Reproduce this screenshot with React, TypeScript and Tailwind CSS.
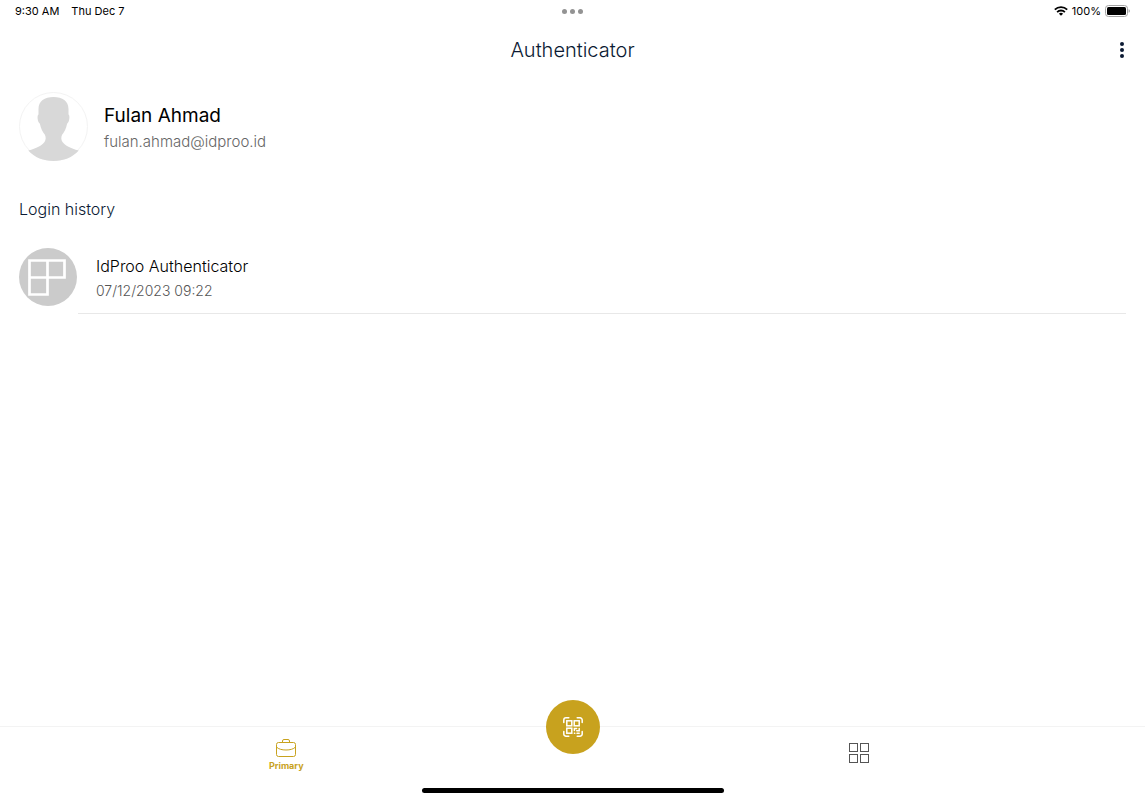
const loginHistory = [
  { id: 1, name: 'IdProo Authenticator', time: '07/12/2023 09:22' },
];

function WifiIcon() {
  return (
    <svg width="14" height="10" viewBox="0 0 14 10" fill="none" stroke="#000" strokeWidth="1.8" aria-hidden="true">
      <path d="M0.8 3.7a8.9 8.9 0 0 1 12.4 0" />
      <path d="M3.1 6.1a5.6 5.6 0 0 1 7.8 0" />
      <path d="M7 9.8L4.9 7.8a3 3 0 0 1 4.2 0z" fill="#000" stroke="none" />
    </svg>
  );
}

function BatteryIcon() {
  return (
    <svg width="25" height="12" viewBox="0 0 25 12" fill="none" aria-hidden="true">
      <rect x="0.5" y="0.5" width="22" height="11" rx="3" stroke="#a3a3a3" />
      <rect x="2" y="2" width="19" height="8" rx="1.5" fill="#000" />
      <path d="M23.6 4.2c1 .3 1.2 1 1.2 1.8s-.2 1.5-1.2 1.8z" fill="#a3a3a3" />
    </svg>
  );
}

function StatusBar() {
  return (
    <div className="grid grid-cols-3 items-center h-6 pb-0.5 px-[15px] text-[11px] text-black">
      <div className="flex gap-3">
        <span>9:30 AM</span>
        <span>Thu Dec 7</span>
      </div>
      <svg className="justify-self-center" width="21" height="5" viewBox="0 0 21 5" fill="#939393" aria-hidden="true">
        <circle cx="2.5" cy="2.5" r="2.5" />
        <circle cx="10.5" cy="2.5" r="2.5" />
        <circle cx="18.5" cy="2.5" r="2.5" />
      </svg>
      <div className="flex items-center justify-end gap-1">
        <WifiIcon />
        <span>100%</span>
        <BatteryIcon />
      </div>
    </div>
  );
}

function Avatar() {
  return (
    <svg className="shrink-0" width="70" height="70" viewBox="0 0 70 70" aria-hidden="true">
      <circle cx="34.5" cy="34.5" r="34" fill="#fff" stroke="#f3f3f3" />
      <path
        d="M34.5 5C25.500 5 19.500 9 19.500 17v5.500c-1.600.8-1.100 7.500 1.400 9.200.9 4.600 2.700 8.300 5 11 1.100 2.200 1.100 5.200-.4 7.300-2.600 3.800-8 6.200-16.200 8.500C15.500 65.500 24.500 69 34.500 69s19-3.500 25.200-10.500c-8.200-2.300-13.600-4.700-16.200-8.500-1.500-2.100-1.500-5.100-.4-7.300 2.300-2.700 4.100-6.400 5-11 2.500-1.700 3-8.400 1.400-9.200V17c0-8-6-12-15-12z"
        fill="#d8d8d8"
      />
    </svg>
  );
}

function AppLogo() {
  return (
    <svg className="shrink-0" width="58" height="58" viewBox="0 0 58 58" fill="none" aria-hidden="true">
      <circle cx="29" cy="29" r="29" fill="#cbcbcb" />
      <path d="M10.5 12.5h35v17h-17v17h-18zM28.5 12.5v17M10.5 29.5h18" stroke="#fff" strokeWidth="2.7" />
    </svg>
  );
}

function BriefcaseIcon() {
  return (
    <svg width="20" height="18" viewBox="0 0 20 18" fill="none" stroke="currentColor" aria-hidden="true">
      <rect x="0.5" y="3.5" width="19" height="14" rx="2" />
      <path d="M6.5 3.5V2A1.5 1.5 0 0 1 8 .5h4A1.5 1.5 0 0 1 13.5 2v1.5" />
      <path d="M.5 8c2 2.2 5.500 3 9.500 3s7.500-.8 9.500-3" />
    </svg>
  );
}

function QrIcon() {
  return (
    <svg width="20" height="20" viewBox="0 0 20 20" fill="none" stroke="#fff" strokeWidth="1.5" strokeLinecap="round" aria-hidden="true">
      <path d="M.8 5.5V3A2.2 2.2 0 0 1 3 .8h2.8M14.200.8H17A2.200 2.200 0 0 1 19.200 3v2.500M19.200 14.500V17a2.200 2.200 0 0 1-2.200 2.200h-2.800M5.800 19.200H3A2.200 2.200 0 0 1 .8 17v-2.500" />
      <rect x="3.8" y="3.8" width="5" height="5" />
      <rect x="11.2" y="3.8" width="5" height="5" />
      <rect x="3.8" y="11.2" width="5" height="5" />
      <path d="M11.400 13.500v-2.100h2.200M13.700 13.700h2.500v-2.300M11.400 16.200h.4M14 16.200h2.200" />
    </svg>
  );
}

function GridIcon() {
  return (
    <svg width="20" height="20" viewBox="0 0 20 20" fill="none" stroke="#555" aria-hidden="true">
      <rect x="0.5" y="0.5" width="8" height="8" />
      <rect x="11.5" y="0.5" width="8" height="8" />
      <rect x="0.5" y="11.5" width="8" height="8" />
      <rect x="11.5" y="11.5" width="8" height="8" />
    </svg>
  );
}

export default function App() {
  return (
    <div className="min-h-screen flex flex-col bg-white font-['Inter',sans-serif]">
      <StatusBar />

      <header className="grid grid-cols-[1fr_auto_1fr] items-center h-13 px-5 text-[#0b1a33]">
        <h1 className="col-start-2 text-xl font-light">Authenticator</h1>
        <button type="button" aria-label="More options" className="justify-self-end">
          <svg width="6" height="16" viewBox="0 0 6 16" fill="currentColor" aria-hidden="true">
            <circle cx="3" cy="2" r="2" />
            <circle cx="3" cy="8" r="2" />
            <circle cx="3" cy="14" r="2" />
          </svg>
        </button>
      </header>

      <main className="flex-1 px-[19px] pt-4">
        {/* Profile */}
        <section className="flex items-center gap-[15px]">
          <Avatar />
          <div className="pt-0.5">
            <h2 className="text-[19px] leading-7 text-black">Fulan Ahmad</h2>
            <p className="text-[15px] leading-6 font-light text-[#666]">fulan.ahmad@idproo.id</p>
          </div>
        </section>

        {/* Login history */}
        <section className="pt-[35px]">
          <h2 className="text-base leading-6 font-light text-[#0b1a33]">Login history</h2>
          <ul className="pt-[27px]">
            {loginHistory.map((item) => (
              <li key={item.id} className="flex">
                <AppLogo />
                <div className="flex-1 ml-px pl-[18px] pt-1.5 pb-2.5 border-b border-[#e8e8e8]">
                  <p className="text-base leading-6 font-light text-black">{item.name}</p>
                  <p className="mt-px text-sm leading-6 font-light text-[#555]">{item.time}</p>
                </div>
              </li>
            ))}
          </ul>
        </section>
      </main>

      <nav className="relative grid grid-cols-2 h-[74px] pt-3 border-t border-[#f3f3f3] items-start justify-items-center">
        <button type="button" className="flex flex-col items-center gap-px text-[#c8a21e]">
          <BriefcaseIcon />
          <span className="text-[9px] leading-4 font-bold">Primary</span>
        </button>
        <button type="button" aria-label="Apps" className="pt-1">
          <GridIcon />
        </button>
        <button
          type="button"
          aria-label="Scan QR code"
          className="absolute left-1/2 -top-[27px] -translate-x-1/2 size-[54px] rounded-full bg-[#c8a21e] flex items-center justify-center"
        >
          <QrIcon />
        </button>
        {/* Home indicator */}
        <span className="absolute left-1/2 bottom-[7px] -translate-x-1/2 w-[302px] h-[5px] rounded-full bg-black" />
      </nav>
    </div>
  );
}
